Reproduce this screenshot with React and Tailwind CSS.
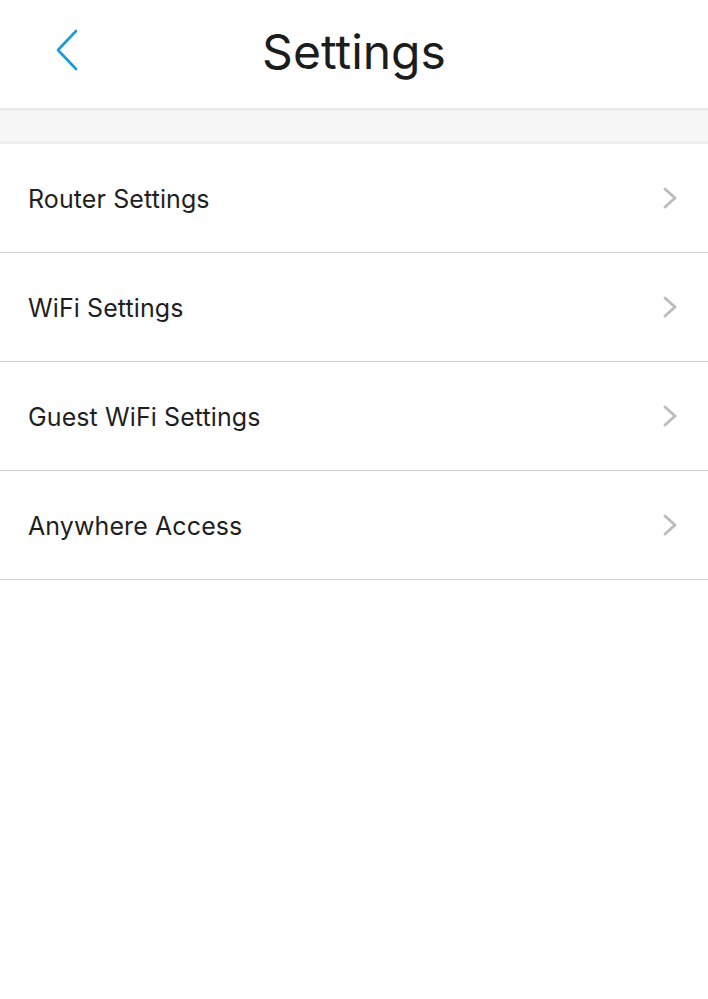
export default function App() {
  const items = ['Router Settings', 'WiFi Settings', 'Guest WiFi Settings', 'Anywhere Access'];

  return (
    <div className="min-h-screen bg-white" style={{ fontFamily: 'Inter, "Noto Sans", sans-serif' }}>
      {/* Header */}
      <div className="relative flex h-[108px] items-center justify-center">
        <button className="absolute left-[54px] top-[28px] h-[44px] w-[28px]">
          <svg width="28" height="44" viewBox="0 0 28 44" fill="none">
            <path d="M22 3 L4 22 L22 41" stroke="#1b9bd6" strokeWidth="2.6" strokeLinecap="round" strokeLinejoin="round" />
          </svg>
        </button>
        <h1 className="-mt-[4px] text-[48px] font-normal text-[#1c1c1c]">Settings</h1>
      </div>

      {/* Section gap */}
      <div className="h-[36px] border-y-[3px] border-[#ececec] bg-[#f7f7f7]" />

      {/* List */}
      <div>
        {items.map((label) => (
          <div key={label} className="flex h-[109px] items-center justify-between border-b border-[#cfcfcf] pl-[28px] pr-[30px]">
            <span className="mt-[4px] text-[25px] tracking-[0.1px] text-[#1f1f1f]">{label}</span>
            <svg width="16" height="24" viewBox="0 0 16 24" fill="none">
              <path d="M3 3 L13 12 L3 21" stroke="#bdbdbd" strokeWidth="3" strokeLinecap="round" strokeLinejoin="round" />
            </svg>
          </div>
        ))}
      </div>
    </div>
  );
}
